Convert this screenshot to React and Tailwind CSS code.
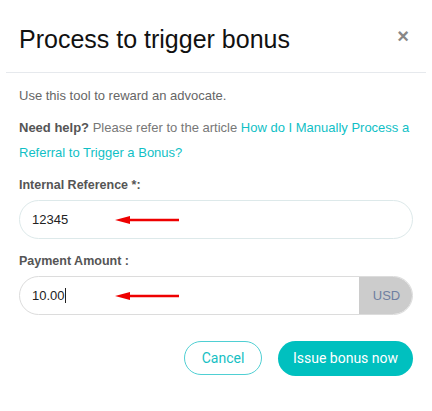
import React from 'react';

const Arrow = () => (
  <svg className="absolute left-[95px] top-1/2 -translate-y-1/2" width="66" height="10" viewBox="0 0 66 10">
    <line x1="10" y1="5" x2="64" y2="5" stroke="#ee0000" strokeWidth="2.5" />
    <polygon points="0,5 15,1 15,9" fill="#ee0000" />
  </svg>
);

export default function App() {
  return (
    <div className="w-[432px] h-[411px] bg-white font-['Liberation_Sans',Arial,sans-serif]">
      {/* header */}
      <div className="flex items-start justify-between pl-[19px] pr-[19px] pt-[25px] pb-[19px] mx-[6px] border-b border-[#e6e9ed]">
        <h1 className="-ml-[6px] text-[25px] leading-[28px] text-[#111]">Process to trigger bonus</h1>
        <button className="text-[#888] text-[20px] leading-[16px] font-bold mt-[3px] -mr-[2px]">×</button>
      </div>

      <div className="px-[19px] pt-[15px]">
        <p className="text-[13px] text-[#666] leading-[16px]">Use this tool to reward an advocate.</p>

        <p className="mt-[11px] text-[13px] leading-[25px] text-[#777]">
          <span className="font-bold text-[#555]">Need help?</span> Please refer to the article{' '}
          <a className="text-[#10bfc6]">How do I Manually Process a Referral to Trigger a Bonus?</a>
        </p>

        <label className="block mt-[12px] text-[12.5px] font-bold text-[#555] leading-[16px]">Internal Reference *:</label>
        <div className="relative mt-[7px] h-[39px] rounded-full border border-[#dde9ea] flex items-center pl-[12px]">
          <span className="text-[13px] text-[#222]">12345</span>
          <Arrow />
        </div>

        <label className="block mt-[14px] text-[12.5px] font-bold text-[#555] leading-[16px]">Payment Amount :</label>
        <div className="relative mt-[7px] h-[39px] rounded-full border border-[#dcdcdc] flex overflow-hidden">
          <div className="flex-1 flex items-center pl-[12px]">
            <span className="text-[13px] text-[#222]">10.00</span>
            <span className="w-px h-[15px] bg-[#222]" />
          </div>
          <div className="w-[53px] bg-[#cccccc] flex items-center justify-center pl-[2px] text-[13px] text-[#6f7fa0]">USD</div>
          <Arrow />
        </div>

        <div className="flex justify-end gap-[16px] mt-[26px] font-['Roboto',sans-serif]">
          <button className="h-[34px] w-[78px] rounded-full border border-[#4fcfd3] text-[#17bfc4] text-[14px]">Cancel</button>
          <button className="h-[35px] w-[135px] rounded-full bg-[#00c0bf] text-white text-[14px]">Issue bonus now</button>
        </div>
      </div>
    </div>
  );
}
